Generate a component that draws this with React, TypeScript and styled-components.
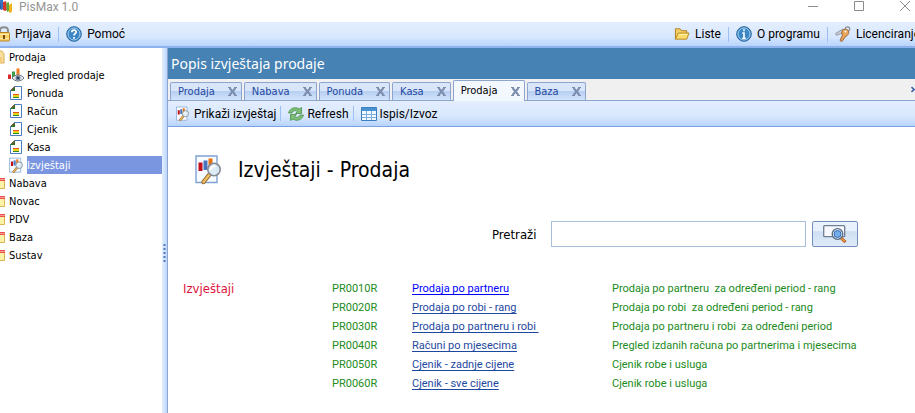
import React from "react";
import styled, { createGlobalStyle } from "styled-components";

const Global = createGlobalStyle`
  * { box-sizing: border-box; }
  html, body, #root { height: 100%; }
  body {
    margin: 0;
    overflow: hidden;
    background: #fff;
    color: #000;
    font: 11px/14px "DejaVu Sans Condensed", "Open Sans", sans-serif;
  }
  button, input { font: inherit; color: inherit; }
  svg { display: block; flex: none; }
`;

const Shell = styled.div`
  display: flex;
  flex-direction: column;
  height: 100%;
  overflow: hidden;
`;
const TitleBar = styled.header`
  display: flex;
  flex: none;
  align-items: flex-start;
  height: 22px;
  padding-right: 4px;
  color: #959595;
  font: 12px/14px Roboto, sans-serif;
`;
const AppName = styled.span`
  flex: 1;
  padding-left: 6px;
`;
const WindowButton = styled.button`
  display: grid;
  place-items: center;
  width: 46px;
  height: 12px;
  padding: 0;
  border: 0;
  background: none;
  &:last-child { width: 12px; margin-left: 17px; }
`;
const MainBar = styled.nav`
  display: flex;
  flex: none;
  align-items: center;
  height: 26px;
  margin-right: -12px;
  border-bottom: 2px solid #8db2ee;
  background: linear-gradient(#e3eefe 0%, #d9e8fe 60%, #b8d4fd 100%);
  font: 12px/18px Roboto, sans-serif;
`;
const BarButton = styled.button<{ $push?: boolean; $edge?: boolean; $tight?: boolean }>`
  display: flex;
  flex: none;
  align-items: center;
  gap: ${(p) => (p.$tight ? "3px" : "5px")};
  height: 18px;
  margin-left: ${(p) => (p.$push ? "auto" : "0")};
  padding: 0 ${(p) => (p.$tight ? "4px" : "7px")} 0 ${(p) => (p.$edge ? "0" : "7px")};
  border: 0;
  background: none;
  white-space: nowrap;
`;
const Divider = styled.span`
  flex: none;
  width: 1px;
  height: 15px;
  background: #9cc0f5;
`;
const Body = styled.div`
  display: flex;
  flex: 1;
  min-height: 0;
`;
const Sidebar = styled.aside`
  flex: none;
  width: 162px;
  overflow: hidden;
`;
const Tree = styled.ul`
  margin: 0;
  padding: 0;
  list-style: none;
`;
const Node = styled.button<{ $child?: boolean }>`
  display: flex;
  align-items: center;
  gap: 2px;
  width: 100%;
  height: 18px;
  padding: 0 0 0 ${(p) => (p.$child ? "8px" : "0")};
  border: 0;
  background: none;
  text-align: left;
`;
const NodeText = styled.span<{ $on?: boolean; $child?: boolean }>`
  flex: 1;
  padding: 3px 0 1px ${(p) => (p.$child ? "0" : "2px")};
  color: ${(p) => (p.$on ? "#fff" : "#000")};
  background: ${(p) => (p.$on ? "#7b96e0" : "none")};
`;
const Splitter = styled.div`
  display: flex;
  flex: none;
  justify-content: center;
  width: 6px;
  padding-top: 196px;
  border-right: 1px solid #8da4cf;
  background: linear-gradient(90deg, #e3efff, #bdd7fc);
`;
const Main = styled.main`
  display: flex;
  flex: 1;
  flex-direction: column;
  min-width: 0;
`;
const Heading = styled.h1`
  flex: none;
  margin: 0;
  padding: 6px 3px;
  color: #fff;
  background: #4682b4;
  font: 14px/19px "Noto Sans", sans-serif;
`;
const Tabs = styled.div`
  display: flex;
  flex: none;
  align-items: flex-end;
  gap: 2px;
  height: 22px;
  padding-left: 2px;
  border-bottom: 1px solid #8da4cf;
  background: #f0f0f0;
`;
const Tab = styled.div<{ $on?: boolean }>`
  display: flex;
  align-items: center;
  gap: 13px;
  height: ${(p) => (p.$on ? "21px" : "18px")};
  margin-bottom: ${(p) => (p.$on ? "-1px" : "0")};
  padding: 0 4px 0 7px;
  border: 1px solid #8da4cf;
  border-bottom: 0;
  border-radius: 2px 2px 0 0;
  color: ${(p) => (p.$on ? "#000" : "#1e48a0")};
  background: ${(p) => (p.$on ? "#f3f8ff" : "linear-gradient(#d9e6fa 0 45%, #b7cff2 50%, #d3e4fb)")};
`;
const TabButton = styled.button`
  padding: 0;
  border: 0;
  background: none;
`;
const TabScroll = styled.span`
  width: 4px;
  height: 15px;
  margin-left: auto;
  overflow: hidden;
`;
const ToolBar = styled.div`
  display: flex;
  flex: none;
  align-items: center;
  height: 26px;
  border-bottom: 1px solid #7ba3e2;
  background: linear-gradient(#e3eefe 0%, #d9e8fe 60%, #b8d4fd 100%);
  font: 12px/18px Roboto, sans-serif;
`;
const Page = styled.div`
  flex: 1;
  padding: 27px 15px 0;
`;
const Banner = styled.div`
  display: flex;
  align-items: center;
  gap: 13px;
  padding-left: 10px;
`;
const BannerTitle = styled.h2`
  margin: 0;
  font: 21px/32px "DejaVu Sans Condensed", sans-serif;
`;
const Search = styled.form`
  display: flex;
  align-items: center;
  gap: 6px;
  margin: 35px 0 0 309px;
  font: 13px/19px "DejaVu Sans Condensed", sans-serif;
`;
const SearchLabel = styled.label`
  width: 53px;
`;
const SearchBox = styled.input`
  width: 255px;
  height: 26px;
  padding: 0 6px;
  border: 1px solid #a9bfdc;
  outline: 0;
`;
const SearchButton = styled.button`
  display: grid;
  place-items: center;
  width: 46px;
  height: 26px;
  padding: 0;
  border: 1px solid #7390be;
  border-radius: 2px;
  background: linear-gradient(#e8f1fc 0 38%, #cfdff2 40%, #dfebfa);
`;
const Reports = styled.section`
  display: grid;
  grid-template-columns: 149px 1fr;
  margin-top: 32px;
`;
const Group = styled.h3`
  margin: 0;
  color: #dc143c;
  font: 13px/19px "DejaVu Sans Condensed", sans-serif;
`;
const List = styled.table`
  width: 100%;
  border-collapse: collapse;
  table-layout: fixed;
  color: #228b22;
  font: 11px/19px Roboto, sans-serif;
`;
const Cell = styled.td<{ $w?: number }>`
  width: ${(p) => (p.$w ? p.$w + "px" : "auto")};
  padding: 0;
  white-space: pre;
`;
const Link = styled.a<{ $fresh?: boolean }>`
  color: ${(p) => (p.$fresh ? "#0000ff" : "#1e48a0")};
  text-decoration: underline;
  text-underline-offset: 2px;
`;

const Logo = () => (
  <svg width="13" height="14" viewBox="0 0 13 14">
    <path d="M-3 0h3l3 9-2 1-4-6z" fill="#1d4f9e" />
    <path d="M0 0h3v9l-2 1z" fill="#3474c2" />
    <path d="M3 2l3-1 1 9-2 1-2-1z" fill="#d7372d" />
    <path d="M6 3l3-1v9l-2 1z" fill="#5caa3b" />
    <path d="M9 5l3-2v9l-3 1z" fill="#f2b61c" />
  </svg>
);
const Lock = () => (
  <svg width="10" height="16" viewBox="0 0 10 16">
    <path d="M0 7V4.500C0 0 8 0 8 4.500V7" fill="none" stroke="#8d8d8d" strokeWidth="2" />
    <rect x="-4" y="6.500" width="13.500" height="8.500" rx="1" fill="#f7cf62" stroke="#b98324" />
    <path d="M-3 8.500h12M-3 12.500h12" stroke="#fdebb0" />
    <path d="M4 9v4" stroke="#6d4a14" strokeWidth="2" />
  </svg>
);
const Round = ({ kind }: { kind: "help" | "info" }) => (
  <svg width="16" height="16" viewBox="0 0 16 16">
    <circle cx="8" cy="8" r="7.300" fill="#3b86c4" stroke="#2565a0" />
    <circle cx="8" cy="8" r="6" fill="none" stroke="#a8d0ee" />
    {kind === "help" ? (
      <path d="M5.800 6.300c0-3 4.600-2.800 4.400-.3C10.100 7.500 8 7.600 8 9.400M8 11v1.700" fill="none" stroke="#fff" strokeWidth="1.700" />
    ) : (
      <path d="M8 3.300v1.900M6.300 7H8v5M6.300 12.200h3.500" fill="none" stroke="#fff" strokeWidth="1.600" />
    )}
  </svg>
);
const FolderOpen = () => (
  <svg width="16" height="16" viewBox="0 0 17 16">
    <path d="M1.500 13.500v-11h5l1.500 2h5.500v3" fill="#f5d067" stroke="#a97b18" />
    <path d="M1.500 13.500l3-6.500h11.500l-2.500 6.500z" fill="#fbdc6a" stroke="#b4851d" />
    <path d="M5.500 8.500h8.500" stroke="#fff3b8" />
  </svg>
);
const Keys = () => (
  <svg width="16" height="16" viewBox="0 0 16 16">
    <path d="M8 3L.5 7.500l1 2L9 6z" fill="#c8ccd2" stroke="#7d8188" strokeWidth=".7" />
    <circle cx="12.500" cy="3" r="2.200" fill="none" stroke="#8a8e94" strokeWidth="1.200" />
    <path d="M7.500 4.500c1-2 5-1.500 6 .5s-1 5-3 5.500L7 15.500l-2-1L7.500 9C6.500 8 6.500 6 7.500 4.500z" fill="#e8a55b" stroke="#8f5320" strokeWidth=".8" />
    <circle cx="10.500" cy="5.500" r="1" fill="#fff" />
  </svg>
);
const ReportIcon = ({ size }: { size: number }) => (
  <svg width={size} height={size} viewBox="0 0 30 32">
    <path d="M2 2h21v26.500H2z" fill="#f8fbff" stroke="#7fa3d3" strokeWidth="1.400" />
    <path d="M4.500 8.500h4V17h-4z" fill="#c4101c" />
    <path d="M9.500 6.500h4V16h-4z" fill="#4a74bd" />
    <path d="M14.500 4.500h4V14h-4z" fill="#e8710d" />
    <path d="M15.500 20.500l-6 7.500" stroke="#8a6122" strokeWidth="4.400" strokeLinecap="round" />
    <path d="M15.500 20.500l-6 7.500" stroke="#eebb64" strokeWidth="2.600" strokeLinecap="round" />
    <circle cx="20" cy="15.500" r="6.200" fill="#dbebf8" fillOpacity=".9" stroke="#858b94" strokeWidth="1.600" />
    <path d="M16.500 16c0-3 3-4.500 5-3.500" fill="none" stroke="#fff" strokeWidth="2" />
  </svg>
);
const Refresh = () => (
  <svg width="16" height="16" viewBox="0 0 16 16">
    <path d="M.5 7C2 1.500 8 .5 11 3l2.500-1.500V7.500H7.500L9.500 5.500C7 4 5 4.500 4 7z" fill="#7fbe78" stroke="#4c9149" strokeWidth=".8" />
    <path d="M15.500 9C14 14.500 8 15.500 5 13l-2.500 1.500V8.500h6L6.500 10.500C9 12 11 11.500 12 9z" fill="#7fbe78" stroke="#4c9149" strokeWidth=".8" />
  </svg>
);
const Grid = () => (
  <svg width="16" height="16" viewBox="0 0 16 16">
    <path d="M.5 1.500h15v13H.5z" fill="#f2f9ff" stroke="#3c7fbe" />
    <path d="M1 2h14v3H1z" fill="#4a93d3" />
    <path d="M1 8.500h14M1 11.500h14M5.500 5v9M10.500 5v9" stroke="#7ab0dd" />
  </svg>
);
const Chart = () => (
  <svg width="17" height="16" viewBox="0 0 17 16">
    <path d="M0 7.500h3v4.500H0z" fill="#d92b2b" />
    <path d="M4 4.500h3v6H4z" fill="#3c9e45" />
    <path d="M8.500 1.500h3v7h-3z" fill="#ef7d24" />
    <path d="M4 11c3-4 9-4 12 0-3 4-9 4-12 0z" fill="#e6e9ee" stroke="#69717d" />
    <circle cx="10" cy="11" r="2.500" fill="#6b7f99" />
    <circle cx="10" cy="11" r="1" fill="#1d2838" />
  </svg>
);
const Doc = () => (
  <svg width="17" height="16" viewBox="0 0 17 16">
    <path d="M2.500 5.500l4-4h7v13h-11z" fill="#fff" stroke="#4b7fc4" />
    <path d="M2 6l5-5v5z" fill="#27762b" />
    <path d="M3.500 5L6.500 2" stroke="#b8402c" />
    <path d="M5 9h6v1H5z" fill="#e2541c" />
    <path d="M5 10h6v2H5z" fill="#e6d61a" />
    <path d="M5 12h6v1H5z" fill="#2e8b2f" />
  </svg>
);
const Folder = ({ open }: { open?: boolean }) =>
  open ? (
    <svg width="5" height="16" viewBox="0 0 5 16">
      <path d="M-2 2h4l2 3v9h-6z" fill="#fae0a0" stroke="#d9ac55" />
      <path d="M-2 8h4v6h-4z" fill="#f6cd7c" />
    </svg>
  ) : (
    <svg width="5" height="16" viewBox="0 0 5 16">
      <path d="M-2 3.500h6.500v10H-2z" fill="#fdf3a8" stroke="#dcb456" />
      <path d="M-1 3h7v3h-7z" fill="#e9504b" />
      <path d="M0 4.500h5" stroke="#f79a95" />
    </svg>
  );
const Close = () => (
  <svg width="9" height="9" viewBox="0 0 9 9">
    <path d="M1.500 1l6 7M7.500 1l-6 7" stroke="#7c8dad" strokeWidth="2" />
    <path d="M0 .5h3M6 .5h3M0 8.500h3M6 8.500h3" stroke="#7c8dad" />
  </svg>
);
const Chevron = () => (
  <svg width="9" height="9" viewBox="0 0 9 9">
    <path d="M.5 2l2.500 2.500L.5 7M4.500 2L7 4.500 4.500 7" fill="none" stroke="#3f63a8" strokeWidth="1.600" />
  </svg>
);
const Find = () => (
  <svg width="24" height="18" viewBox="0 0 24 18">
    <rect x=".7" y=".7" width="21" height="11" rx="1" fill="#f7f9fc" stroke="#6d7f95" strokeWidth="1.300" />
    <path d="M18 13l4.500 4" stroke="#b55b17" strokeWidth="3" />
    <path d="M18 13l4 3.500" stroke="#f29a45" strokeWidth="1.300" />
    <circle cx="14.500" cy="9" r="5.300" fill="#eef5fc" stroke="#56697f" strokeWidth="1.300" />
    <circle cx="14.500" cy="9" r="3.500" fill="#73aeea" stroke="#326bb5" />
  </svg>
);

const items: [string, React.ReactNode][] = [
  ["Pregled prodaje", <Chart />],
  ["Ponuda", <Doc />],
  ["Račun", <Doc />],
  ["Cjenik", <Doc />],
  ["Kasa", <Doc />],
  ["Izvještaji", <ReportIcon size={17} />],
];
const folders = ["Nabava", "Novac", "PDV", "Baza", "Sustav"];
const tabs = ["Prodaja", "Nabava", "Ponuda", "Kasa", "Prodaja", "Baza"];
const reports = [
  ["PR0010R", "Prodaja po partneru", "Prodaja po partneru  za određeni period - rang"],
  ["PR0020R", "Prodaja po robi - rang", "Prodaja po robi  za određeni period - rang"],
  ["PR0030R", "Prodaja po partneru i robi ", "Prodaja po partneru i robi  za određeni period"],
  ["PR0040R", "Računi po mjesecima", "Pregled izdanih računa po partnerima i mjesecima"],
  ["PR0050R", "Cjenik - zadnje cijene", "Cjenik robe i usluga"],
  ["PR0060R", "Cjenik - sve cijene", "Cjenik robe i usluga"],
];

export default function App() {
  return (
    <>
      <Global />
      <Shell>
        <TitleBar>
          <Logo />
          <AppName>PisMax 1.0</AppName>
          <WindowButton aria-label="Minimize">
            <svg width="10" height="10"><path d="M0 5.500h10" stroke="#8c8c8c" /></svg>
          </WindowButton>
          <WindowButton aria-label="Maximize">
            <svg width="10" height="10"><path d="M.5 .5h9v9h-9z" fill="none" stroke="#8c8c8c" /></svg>
          </WindowButton>
          <WindowButton aria-label="Close">
            <svg width="10" height="10"><path d="M0 0l10 10M10 0L0 10" stroke="#8c8c8c" /></svg>
          </WindowButton>
        </TitleBar>
        <MainBar>
          <BarButton $edge><Lock />Prijava</BarButton>
          <Divider />
          <BarButton><Round kind="help" />Pomoć</BarButton>
          <Divider as="span" hidden />
          <BarButton $push><FolderOpen />Liste</BarButton>
          <Divider />
          <BarButton><Round kind="info" />O programu</BarButton>
          <Divider />
          <BarButton><Keys />Licenciranje</BarButton>
        </MainBar>
        <Body>
          <Sidebar>
            <Tree>
              <li>
                <Node><Folder open /><NodeText>Prodaja</NodeText></Node>
                <Tree>
                  {items.map(([name, icon]) => (
                    <li key={name}>
                      <Node $child>{icon}<NodeText $child $on={name === "Izvještaji"}>{name}</NodeText></Node>
                    </li>
                  ))}
                </Tree>
              </li>
              {folders.map((name) => (
                <li key={name}><Node><Folder /><NodeText>{name}</NodeText></Node></li>
              ))}
            </Tree>
          </Sidebar>
          <Splitter>
            <svg width="3" height="20"><path d="M1.500 0v20" stroke="#4f79bd" strokeWidth="2" strokeDasharray="2 2" /></svg>
          </Splitter>
          <Main>
            <Heading>Popis izvještaja prodaje</Heading>
            <Tabs>
              {tabs.map((name, i) => (
                <Tab key={i} $on={i === 4}>
                  <TabButton>{name}</TabButton>
                  <TabButton aria-label="Zatvori"><Close /></TabButton>
                </Tab>
              ))}
              <TabScroll><Chevron /></TabScroll>
            </Tabs>
            <ToolBar>
              <BarButton $tight><ReportIcon size={16} />Prikaži izvještaj</BarButton>
              <Divider />
              <BarButton $tight><Refresh />Refresh</BarButton>
              <Divider />
              <BarButton $tight><Grid />Ispis/Izvoz</BarButton>
            </ToolBar>
            <Page>
              <Banner>
                <ReportIcon size={32} />
                <BannerTitle>Izvještaji - Prodaja</BannerTitle>
              </Banner>
              <Search onSubmit={(e) => e.preventDefault()}>
                <SearchLabel htmlFor="query">Pretraži</SearchLabel>
                <SearchBox id="query" />
                <SearchButton aria-label="Pretraži"><Find /></SearchButton>
              </Search>
              <Reports>
                <Group>Izvještaji</Group>
                <List>
                  <tbody>
                    {reports.map(([code, name, text], i) => (
                      <tr key={code}>
                        <Cell $w={80}>{code}</Cell>
                        <Cell $w={200}><Link href="#" $fresh={i === 0}>{name}</Link></Cell>
                        <Cell>{text}</Cell>
                      </tr>
                    ))}
                  </tbody>
                </List>
              </Reports>
            </Page>
          </Main>
        </Body>
      </Shell>
    </>
  );
}
